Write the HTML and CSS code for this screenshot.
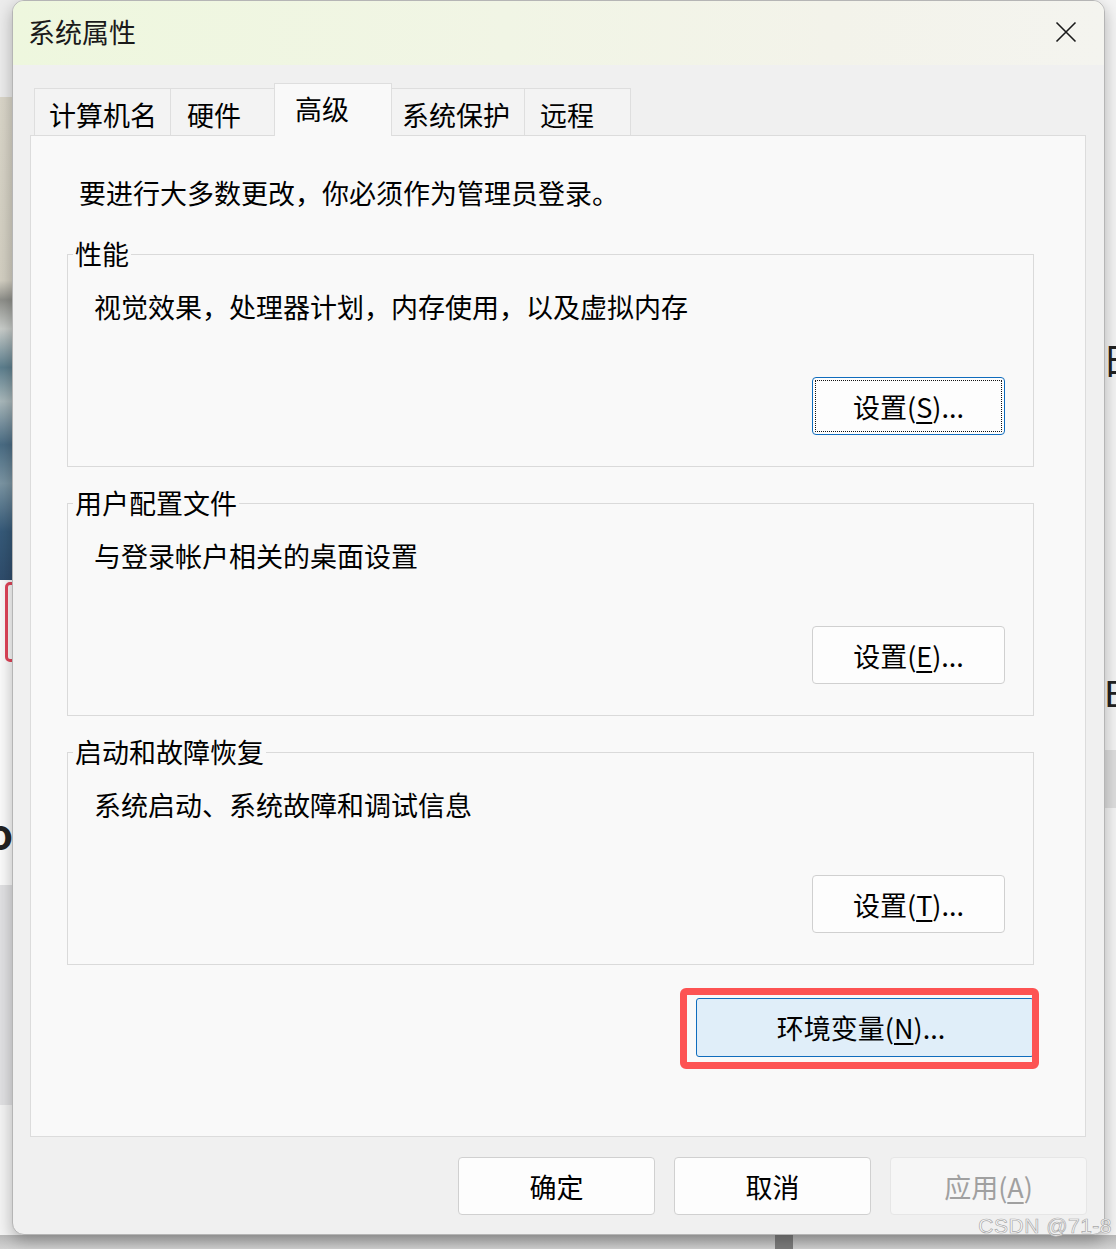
FILE: index.html
```html
<!DOCTYPE html>
<html lang="zh-CN">
<head>
    <meta charset="UTF-8">
    <meta name="viewport" content="width=device-width, initial-scale=1.0">
    <title>系统属性</title>
    <link rel="stylesheet" href="styles.css">
</head>
<body>
    <div class="backdrop">
        <!-- bits of the desktop behind the window -->
        <div class="bg-left-top"></div>
        <div class="bg-left-photo"></div>
        <div class="bg-left-white"><span class="bg-red-mark"></span></div>
        <div class="bg-left-gray"></div>
        <div class="bg-right-gray"></div>
        <div class="bg-bottom"><span class="bg-bottom-block"></span></div>
        <span class="bg-glyph glyph-1">白</span>
        <span class="bg-glyph glyph-2">E</span>
        <span class="bg-glyph glyph-3">o</span>

        <div class="dialog">
            <div class="titlebar">
                <span class="title">系统属性</span>
                <button class="close-btn" aria-label="关闭">
                    <svg width="22" height="22" viewBox="0 0 22 22">
                        <path d="M1.5 1.5 L20.5 20.5 M20.5 1.5 L1.5 20.5" stroke="#1a1a1a" stroke-width="1.6" fill="none"/>
                    </svg>
                </button>
            </div>

            <div class="dialog-body">
                <div class="tabs">
                    <div class="tab">计算机名</div>
                    <div class="tab">硬件</div>
                    <div class="tab active">高级</div>
                    <div class="tab">系统保护</div>
                    <div class="tab">远程</div>
                </div>

                <div class="panel">
                    <p class="intro">要进行大多数更改，你必须作为管理员登录。</p>

                    <fieldset class="group">
                        <legend>性能</legend>
                        <p class="desc">视觉效果，处理器计划，内存使用，以及虚拟内存</p>
                        <div class="group-actions">
                            <button class="btn btn-focus">设置(<u>S</u>)...</button>
                        </div>
                    </fieldset>

                    <fieldset class="group">
                        <legend>用户配置文件</legend>
                        <p class="desc">与登录帐户相关的桌面设置</p>
                        <div class="group-actions">
                            <button class="btn">设置(<u>E</u>)...</button>
                        </div>
                    </fieldset>

                    <fieldset class="group">
                        <legend>启动和故障恢复</legend>
                        <p class="desc">系统启动、系统故障和调试信息</p>
                        <div class="group-actions">
                            <button class="btn">设置(<u>T</u>)...</button>
                        </div>
                    </fieldset>

                    <div class="env-row">
                        <div class="env-wrap">
                            <button class="btn btn-env">环境变量(<u>N</u>)...</button>
                            <span class="highlight"></span>
                        </div>
                    </div>
                </div>

                <div class="footer">
                    <button class="btn btn-footer">确定</button>
                    <button class="btn btn-footer">取消</button>
                    <button class="btn btn-footer" disabled>应用(<u>A</u>)</button>
                </div>
            </div>
        </div>

        <div class="watermark">CSDN @71-8</div>
    </div>
</body>
</html>
```

FILE: styles.css
```css
body {
    margin: 0;
    font-family: "Noto Sans CJK SC", "Noto Sans", sans-serif;
    color: #000;
}

.backdrop {
    position: relative;
    width: 1116px;
    height: 1249px;
    overflow: hidden;
    background: #f4f4f4;
    padding: 0 0 0 12px;
    box-sizing: border-box;
}

/* Desktop pieces */
.bg-left-top {
    position: absolute;
    left: 0;
    top: 0;
    width: 20px;
    height: 97px;
    background: #ececec;
}

.bg-left-photo {
    position: absolute;
    left: 0;
    top: 97px;
    width: 20px;
    height: 483px;
    background: linear-gradient(180deg, #dad6c9 0%, #d3cfc2 38%, #8e8f8a 42%, #c9cdca 48%, #5d7f8e 56%, #a9b8bb 63%, #4a6c84 72%, #7b95a3 80%, #365a79 90%, #2f4d6c 100%);
}

.bg-left-white {
    position: absolute;
    left: 0;
    top: 580px;
    width: 20px;
    height: 305px;
    background: #fbfbfb;
}

.bg-red-mark {
    position: absolute;
    left: 5px;
    top: 2px;
    width: 12px;
    height: 80px;
    border: 3px solid #e2455a;
    border-radius: 5px;
    box-sizing: border-box;
}

.bg-left-gray {
    position: absolute;
    left: 0;
    top: 885px;
    width: 20px;
    height: 220px;
    background: #e1e1e3;
}

.bg-right-gray {
    position: absolute;
    right: 0;
    top: 750px;
    width: 20px;
    height: 58px;
    background: #dedede;
}

.bg-bottom {
    position: absolute;
    left: 0;
    bottom: 0;
    width: 100%;
    height: 14px;
    background: linear-gradient(180deg, #b9b9b9, #d2d2d2);
}

.bg-bottom-block {
    position: absolute;
    left: 775px;
    top: 0;
    width: 18px;
    height: 14px;
    background: #7d7d7d;
}

.bg-glyph {
    position: absolute;
    font-size: 40px;
    line-height: 1;
    color: #222;
}

.glyph-1 { left: 1103px; top: 336px; }
.glyph-2 { left: 1104px; top: 673px; font-size: 36px; }
.glyph-3 { left: -12px; top: 812px; font-weight: bold; }

/* Window */
.dialog {
    position: relative;
    width: 1093px;
    height: 1235px;
    background: #f0f0f0;
    border: 1px solid #b5b5b5;
    border-radius: 12px;
    box-sizing: border-box;
    overflow: hidden;
    box-shadow: 0 6px 16px rgba(0, 0, 0, 0.28);
}

.titlebar {
    height: 64px;
    display: flex;
    align-items: center;
    justify-content: space-between;
    padding: 0 27px 2px 15px;
    box-sizing: border-box;
    background: linear-gradient(90deg, #eef7de 0%, #f1f5e5 45%, #f3f3ea 75%, #f4f4ef 100%);
}

.title {
    font-size: 27px;
    line-height: 36px;
    color: #1a1a1a;
}

.close-btn {
    border: none;
    background: none;
    padding: 0;
    width: 22px;
    height: 22px;
    display: flex;
}

.dialog-body {
    padding: 18px 18px 0 17px;
}

/* Tabs */
.tabs {
    display: flex;
    align-items: flex-end;
    height: 52px;
    margin-left: 4px;
}

.tab {
    position: relative;
    height: 47px;
    box-sizing: border-box;
    padding: 8px 0 0 14px;
    font-size: 27px;
    line-height: 36px;
    background: #f3f3f3;
    border-top: 1px solid #dedede;
    border-right: 1px solid #dedede;
    white-space: nowrap;
}

.tab:nth-child(1) { width: 137px; border-left: 1px solid #dedede; }
.tab:nth-child(2) { width: 104px; padding-left: 16px; }
.tab:nth-child(3) { width: 118px; }
.tab:nth-child(4) { width: 133px; padding-left: 10px; }
.tab:nth-child(5) { width: 106px; padding-left: 15px; }

.tab.active {
    height: 53px;
    margin-bottom: -1px;
    margin-left: -1px;
    padding: 7px 0 0 20px;
    background: #f9f9f9;
    border-left: 1px solid #dedede;
    z-index: 1;
}

/* Panel */
.panel {
    height: 1002px;
    box-sizing: border-box;
    padding: 39px 51px 0 36px;
    background: #f9f9f9;
    border: 1px solid #dcdcdc;
}

.intro {
    margin: 0 0 0 12px;
    font-size: 27px;
    line-height: 36px;
}

.group {
    margin: 25px 0 0 0;
    padding: 17px 28px 31px 5px;
    border: 1px solid #dadada;
    min-width: 0;
}

.group + .group {
    margin-top: 18px;
}

.group legend {
    padding: 0 2px;
    font-size: 27px;
    line-height: 36px;
}

.desc {
    margin: 0 0 0 21px;
    font-size: 27px;
    line-height: 36px;
}

.group-actions {
    display: flex;
    justify-content: flex-end;
    margin-top: 52px;
}

/* Buttons */
.btn {
    width: 193px;
    height: 58px;
    padding: 0;
    box-sizing: border-box;
    font-family: inherit;
    font-size: 27px;
    line-height: 1;
    color: #000;
    background: #fdfdfd;
    border: 1px solid #d0d0d0;
    border-radius: 4px;
}

.btn u {
    text-underline-offset: 4px;
    text-decoration-thickness: 1.5px;
}

.btn-focus {
    border-color: #0f6cbd;
    outline: 1.5px dotted #111;
    outline-offset: -4px;
}

.env-row {
    display: flex;
    justify-content: flex-end;
    margin-top: 33px;
}

.env-wrap {
    position: relative;
}

.btn-env {
    width: 338px;
    height: 59px;
    background: #e0eef9;
    border-color: #0f6cbd;
    border-radius: 3px;
    padding-right: 8px;
}

.highlight {
    position: absolute;
    left: -16px;
    top: -10px;
    right: -5px;
    bottom: -12px;
    border: 7px solid #fd5353;
    border-radius: 6px;
    pointer-events: none;
}

.footer {
    display: flex;
    justify-content: flex-end;
    gap: 19px;
    margin-top: 20px;
    margin-right: -1px;
}

.btn-footer {
    width: 197px;
}

.btn-footer:disabled {
    color: #a0a0a0;
    background: #f6f6f6;
    border-color: #e6e6e6;
}

.watermark {
    position: absolute;
    right: 4px;
    top: 1214px;
    font-family: "Liberation Sans", Arial, sans-serif;
    font-size: 21px;
    color: #fff;
    -webkit-text-stroke: 0.7px #a8a8a8;
    letter-spacing: 0.5px;
}
```
